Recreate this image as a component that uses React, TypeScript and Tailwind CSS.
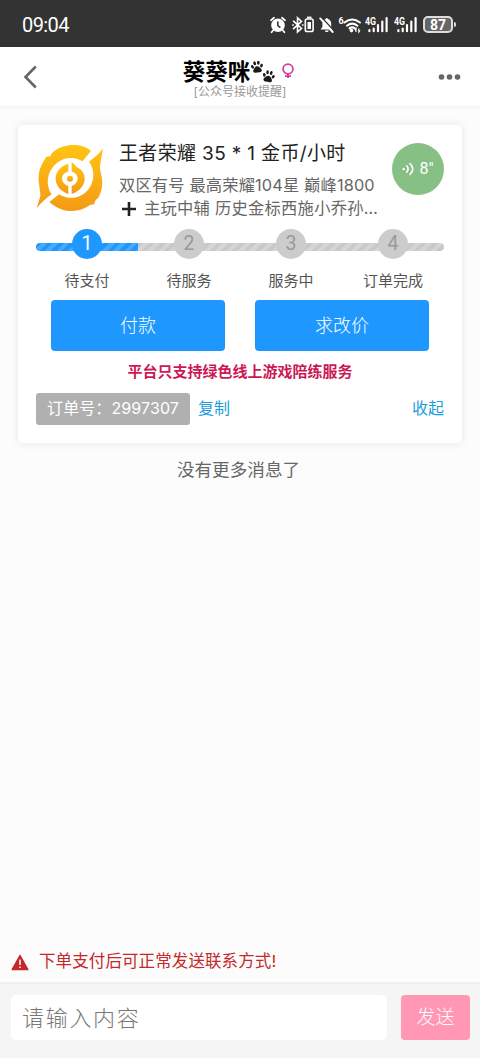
import type { ReactNode } from 'react';

// Order chat page: status bar, chat header, order card and message input.

const STEPS = ['待支付', '待服务', '服务中', '订单完成'];
const CURRENT_STEP = 1;

function Signal() {
  return (
    <svg width="24" height="18" viewBox="0 0 24 18" className="shrink-0 overflow-visible font-[Roboto]">
      <text x="0" y="8.5" fontSize="10" fontWeight="700" fill="#fff" textLength="11" lengthAdjust="spacingAndGlyphs">
        4G
      </text>
      <g stroke="#fff" strokeWidth="2.2" strokeLinecap="round">
        <path d="M4.4 14.2v1M8.7 12.5v2.7M13 9v6.2M17.3 5.6v9.6M21.6 2v13.2" />
      </g>
    </svg>
  );
}

function StatusBar() {
  return (
    <div className="flex h-[47px] items-center bg-[#333] pl-[22px] pt-[2px] text-white">
      <span className="w-[248px] font-[Roboto] text-[20px] leading-6 tracking-[-0.6px]">09:04</span>
      <svg width="96" height="18" viewBox="0 0 96 18" className="shrink-0 overflow-visible font-[Roboto]">
        {/* alarm */}
        <circle cx="8" cy="9.2" r="6.8" fill="#fff" />
        <path d="M1 4.2 4 1.8M15 4.2l-3-2.4M3 14.5l-1.4 1.7M13 14.5l1.4 1.7" stroke="#fff" strokeWidth="1.8" strokeLinecap="round" />
        <path d="M7.8 5.5v4l2.6 2.2" stroke="#333" strokeWidth="1.6" fill="none" />
        {/* bluetooth with device battery */}
        <path d="m23.5 5.2 8 7.3-4 3.5V1.8l4 3.6-8 7.2M22.8 9h.5M32.5 9h.5" stroke="#fff" strokeWidth="1.6" fill="none" strokeLinecap="round" />
        <rect x="35.3" y="3" width="7.8" height="12.5" rx="1.8" stroke="#fff" strokeWidth="1.6" fill="none" />
        <path d="M37 1.5h4.5" stroke="#fff" strokeWidth="1.8" />
        <rect x="37.5" y="6" width="3.5" height="7" fill="#fff" />
        {/* muted bell */}
        <path d="M50.5 13.4h12.5l-1.8-2.5V7.5c0-2.3-1.5-4-3.3-4.5-.3-1.5-1.9-1.5-2.2 0-1.8.5-3.3 2.2-3.3 4.5v3.4z" fill="#fff" />
        <path d="M54.8 14.4h4c-.6 2-3.4 2-4 0z" fill="#fff" />
        <path d="M52 1.8 64 14.8" stroke="#333" strokeWidth="1.3" />
        <path d="M50.2 2.4 62.7 16" stroke="#fff" strokeWidth="1.9" strokeLinecap="round" />
        {/* wifi 6 */}
        <text x="68.5" y="8" fontSize="9" fontWeight="700" fill="#fff">
          6
        </text>
        <g stroke="#fff" strokeWidth="2.1" fill="none" strokeLinecap="round">
          <path d="M74.5 6.5q7.7-6 15.4 0M77 9.7q5.2-4.2 10.4 0M79.5 12.4q2.7-2 5.4 0" />
        </g>
        <circle cx="81.5" cy="14.6" r="1.8" fill="#fff" />
        <path d="M86 16v-3.4l-1.2 1.6M88.8 12.6V16l1.2-1.6" stroke="#fff" strokeWidth="1.2" fill="none" />
      </svg>
      <div className="-ml-px flex gap-[5px]">
        <Signal />
        <Signal />
      </div>
      <div className="ml-[5px] flex h-[17px] w-[30px] items-center justify-center rounded-[5px] border-2 border-[#ddd] bg-[#666] font-[Roboto] text-[14px] font-bold leading-none">
        87
      </div>
      <div className="ml-px h-[5px] w-[2px] rounded-r bg-[#ddd]" />
    </div>
  );
}

function Paw() {
  return (
    <g fill="#1c1c1c">
      <ellipse cx="-4.7" cy="-.8" rx="1.4" ry="2" transform="rotate(-25 -4.7 -.8)" />
      <ellipse cx="-1.9" cy="-4.2" rx="1.4" ry="2.1" transform="rotate(-8 -1.9 -4.2)" />
      <ellipse cx="2" cy="-4.2" rx="1.4" ry="2.1" transform="rotate(8 2 -4.2)" />
      <ellipse cx="4.9" cy="-.8" rx="1.4" ry="2" transform="rotate(25 4.9 -.8)" />
      <path d="M0-.8c2 0 2.6 1.6 3.8 2.8 1.5 1.6.6 4-1.5 3.8C.9 5.5-.9 5.500-2.3 5.8-4.4 6-5.3 3.6-3.8 2-2.6.8-2-.8 0-.8z" />
    </g>
  );
}

function Header() {
  return (
    <header className="grid h-[60px] grid-cols-[60px_1fr_60px] items-start border-b border-[#f5f5f5] bg-white shadow-[0_1px_3px_rgba(0,0,0,0.04)]">
      <svg width="15" height="24" viewBox="0 0 15 24" className="ml-[23px] mt-[18px]" fill="none" stroke="#666" strokeWidth="2.6">
        <path d="M12.8 1.5 2.5 12l10.3 10.5" />
      </svg>
      <div className="flex flex-col items-center">
        <div className="flex h-[35px] items-center pr-[2px] pt-[12px]">
          <h1 className="pt-[3px] text-[22.5px] font-bold leading-none text-black">葵葵咪</h1>
          <svg width="26" height="26" viewBox="0 0 26 26" className="mt-[3px]">
            <g transform="translate(7 8) rotate(-8) scale(.95)">
              <Paw />
            </g>
            <g transform="translate(18.500 17.500) rotate(12) scale(.95)">
              <Paw />
            </g>
          </svg>
          <svg width="14" height="16" viewBox="0 0 14 16" className="ml-[5px]" fill="none" stroke="#d0409c" strokeWidth="1.8">
            <circle cx="7" cy="6" r="4.9" />
            <path d="M7 11v4M4 13.2h6" />
          </svg>
        </div>
        <p className="mt-[3px] text-[12px] leading-[14px] text-[#999]">[公众号接收提醒]</p>
      </div>
      <svg width="23" height="8" viewBox="0 0 23 8" className="ml-[18px] mt-[26px]" fill="#666">
        <circle cx="3.5" cy="4" r="2.8" />
        <circle cx="11.5" cy="4" r="2.8" />
        <circle cx="19.5" cy="4" r="2.8" />
      </svg>
    </header>
  );
}

function GameLogo() {
  return (
    <svg width="68" height="68" viewBox="48 42 204 204" className="shrink-0">
      <defs>
        <linearGradient id="gold" x1="0" y1="0" x2="0" y2="1">
          <stop offset="0" stopColor="#ffc414" />
          <stop offset="1" stopColor="#f49a14" />
        </linearGradient>
      </defs>
      <g fill="url(#gold)">
        <path d="M213 63C196 47 171 43 146 46c-20 3-36 10-50 23l-5 10-12 1-9 15c-14 22-17 47-12 72 1 16 6 27 1 38l-9 30c15-18 28-31 45-42-13-18-15-43-7-63 12-30 39-49 71-46 11 1 21 5 28 10z" />
        <path d="M249 55c-12 17-25 28-42 40 14 19 17 43 8 66-13 31-44 48-77 41-8-2-15-5-21-9l-29 23c14 13 32 23 51 26 29 4 52-3 71-17l12-2 5-13 8-7c11-18 15-44 9-67-2-13-6-22-3-35z" />
        <path d="M145 101v23c-13 5-19 12-19 22s7 17 19 22v24c-22-8-38-24-38-46s16-38 38-45z" />
        <path d="M155 95v29c12 5 18 12 18 22s-7 17-18 22v24c22-8 39-24 39-46 0-13-6-23-14-29l-9-5z" />
        <circle cx="150" cy="146" r="9" />
      </g>
    </svg>
  );
}

function StepBar() {
  return (
    <div className="mt-[17px] grid grid-cols-4">
      {STEPS.map((label, i) => {
        const done = i < CURRENT_STEP;
        const ends = i === 0 ? 'rounded-l-full' : i === STEPS.length - 1 ? 'rounded-r-full' : '';
        const stripes = done
          ? 'bg-[repeating-linear-gradient(135deg,#1e98ff_0_4px,#48aaff_4px_8px)]'
          : 'bg-[repeating-linear-gradient(135deg,#c9c9c9_0_4px,#d5d5d5_4px_8px)]';
        return (
          <div key={label} className="flex flex-col items-center">
            <div className="grid w-full items-center justify-items-center">
              <div className={`col-start-1 row-start-1 mt-[6px] h-[8px] w-full ${stripes} ${ends}`} />
              <div
                className={`z-10 col-start-1 row-start-1 flex size-[30px] items-center justify-center rounded-full font-[Roboto] text-[19.5px] ${
                  done ? 'bg-[#1e98ff] text-white' : 'bg-[#ccc] text-[#999]'
                }`}
              >
                {i + 1}
              </div>
            </div>
            <span className="mt-[12px] text-[15px] leading-[19px] text-[#555]">{label}</span>
          </div>
        );
      })}
    </div>
  );
}

function PrimaryButton({ children }: { children: ReactNode }) {
  return (
    <button className="h-[51px] w-[174px] rounded-[4px] bg-[#1e98ff] pb-px text-[18px] font-light text-white">
      {children}
    </button>
  );
}

function OrderCard() {
  return (
    <section className="mx-[18px] mt-[18px] h-[318px] rounded-[4px] bg-white px-[18px] pt-[18px] shadow-[0_0_8px_rgba(0,0,0,0.09)]">
      <div className="flex h-[69px]">
        <div className="pt-px">
          <GameLogo />
        </div>
        <div className="ml-[15px] w-[264px] shrink-0 whitespace-nowrap">
          <h2 className="text-[19px] leading-[22px] tracking-[0.35px] text-[#222]">王者荣耀 35 * 1 金币/小时</h2>
          <p className="mt-[9px] text-[16.3px] leading-[23px] tracking-[0.14px] text-[#666]">
            双区有号 最高荣耀104星 巅峰1800
          </p>
          <p className="flex items-center text-[16.3px] leading-[23px] tracking-[0.25px] text-[#666]">
            <svg width="20" height="18" viewBox="0 0 20 18" className="mr-[5px]">
              <path d="M10 2v14M3 9h14" stroke="#222" strokeWidth="2.6" />
            </svg>
            主玩中辅 历史金标西施小乔孙…
          </p>
        </div>
        <button className="ml-[9px] flex size-[52px] shrink-0 items-center justify-center rounded-full bg-[#87c084] font-[Roboto] text-[16px] text-white">
          <svg width="13" height="14" viewBox="0 0 13 14" className="mr-[4px]" fill="none" stroke="#fff" strokeWidth="1.6" strokeLinecap="round">
            <circle cx="1.7" cy="7" r="1.2" fill="#fff" stroke="none" />
            <path d="M4.7 3.8q2.8 3.2 0 6.4M8 1.5q5.5 5.5 0 11" />
          </svg>
          8″
        </button>
      </div>
      <StepBar />
      <div className="mt-[10px] flex justify-between px-[15px]">
        <PrimaryButton>付款</PrimaryButton>
        <PrimaryButton>求改价</PrimaryButton>
      </div>
      <p className="mt-[11px] text-center text-[15px] font-bold leading-[20px] text-[#cc1854]">
        平台只支持绿色线上游戏陪练服务
      </p>
      <div className="mt-[11px] flex h-[32px] items-center text-[16px] text-[#1c9cdc]">
        <span className="flex h-full w-[154px] items-center justify-center whitespace-nowrap rounded-[3px] bg-[#b0b0b0] pb-[2px] tracking-[0.1px] text-white">
          订单号：2997307
        </span>
        <button className="ml-[8px] pb-[2px]">复制</button>
        <button className="ml-auto pb-[2px]">收起</button>
      </div>
    </section>
  );
}

function MessageInput() {
  return (
    <footer className="border-t-2 border-[#eee] bg-[#f5f5f5]">
      <div className="flex h-[74px] items-start justify-between pl-[11px] pr-[10px] pt-[11px]">
        <input
          className="h-[45px] w-[376px] rounded-[5px] bg-white px-[11px] text-[22px] font-light tracking-[1.7px] outline-none placeholder:text-[#777]"
          placeholder="请输入内容"
        />
        <button className="h-[45px] w-[69px] rounded-[4px] bg-[#ff97b5] pt-[2px] text-[19px] font-light text-white">
          发送
        </button>
      </div>
    </footer>
  );
}

export default function App() {
  return (
    <div className="flex h-[1058px] w-[480px] flex-col overflow-hidden bg-[#fcfcfc] font-[Inter,'Noto_Sans_CJK_SC',sans-serif]">
      <StatusBar />
      <Header />
      <main className="flex-1">
        <OrderCard />
        <p className="mt-[15px] pr-[3px] text-center text-[17.6px] leading-[24px] text-[#666]">没有更多消息了</p>
      </main>
      <div className="mb-[9px] flex h-[24px] items-center pl-[11px] text-[16.5px] leading-[24px] tracking-[0.1px] text-[#c42828]">
        <svg width="18" height="17" viewBox="0 0 18 17" className="mr-[10px] mt-[2px]">
          <path d="M9 1.5 16.8 15.5H1.2z" fill="#c42828" stroke="#c42828" strokeWidth="1.5" strokeLinejoin="round" />
          <path d="M9 5.5v5.5M9 12.5v1.5" stroke="#fff" strokeWidth="1.5" />
        </svg>
        下单支付后可正常发送联系方式!
      </div>
      <MessageInput />
    </div>
  );
}
